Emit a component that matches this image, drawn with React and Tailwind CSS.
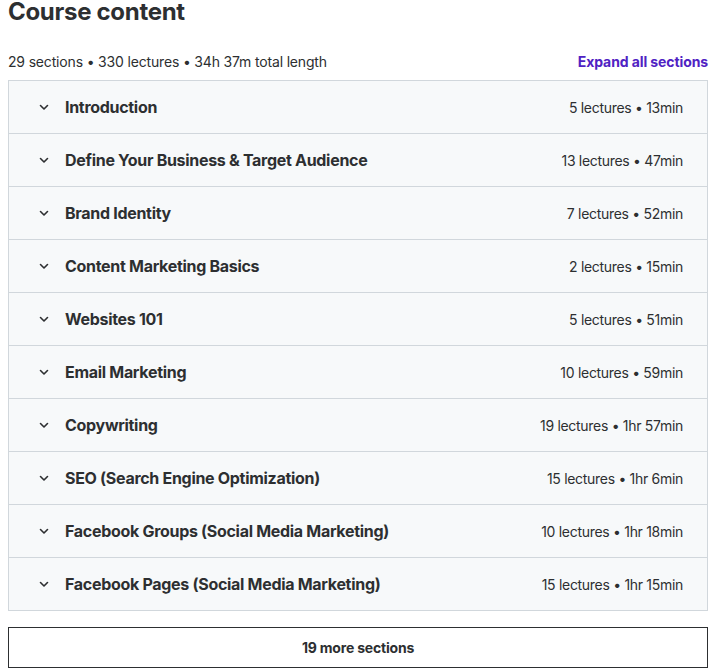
import React from 'react';

const sections = [
    { title: 'Introduction', meta: '5 lectures • 13min' },
    { title: 'Define Your Business & Target Audience', meta: '13 lectures • 47min' },
    { title: 'Brand Identity', meta: '7 lectures • 52min' },
    { title: 'Content Marketing Basics', meta: '2 lectures • 15min' },
    { title: 'Websites 101', meta: '5 lectures • 51min' },
    { title: 'Email Marketing', meta: '10 lectures • 59min' },
    { title: 'Copywriting', meta: '19 lectures • 1hr 57min' },
    { title: 'SEO (Search Engine Optimization)', meta: '15 lectures • 1hr 6min' },
    { title: 'Facebook Groups (Social Media Marketing)', meta: '10 lectures • 1hr 18min' },
    { title: 'Facebook Pages (Social Media Marketing)', meta: '15 lectures • 1hr 15min' },
];

const Chevron = () => (
    <svg width="12" height="12" viewBox="0 0 12 12" fill="none" className="shrink-0">
        <path d="M2.5 4.5 L6 8 L9.5 4.5" stroke="#2d2f31" strokeWidth="1.6" strokeLinecap="round" strokeLinejoin="round" />
    </svg>
);

const App = () => {
    return (
        <div className="bg-white w-[717px] h-[672px] overflow-hidden pl-2 pr-[9px] text-[#2d2f31] font-['Inter',sans-serif]">
            <h2 className="text-[24px] leading-[26px] font-bold tracking-[-0.3px] -mt-[1px]">Course content</h2>

            <div className="flex items-end justify-between mt-[27px] mb-[8px]">
                <span className="text-[14px] leading-[20px] tracking-[-0.17px]">29 sections • 330 lectures • 34h 37m total length</span>
                <button className="text-[14px] leading-[20px] font-bold tracking-[-0.1px] text-[#5022c3]">Expand all sections</button>
            </div>

            <div className="border border-[#d1d7dc]">
                {sections.map((s, i) => (
                    <div
                        key={s.title}
                        className={`h-[52px] bg-[#f7f9fa] flex items-center pl-[29px] pr-6 ${i < sections.length - 1 ? 'border-b border-[#d1d7dc] box-content' : ''}`}
                    >
                        <Chevron />
                        <span className="ml-[15px] text-[16px] font-bold tracking-[-0.3px] flex-1">{s.title}</span>
                        <span className="text-[14px] tracking-[-0.3px] text-[#2d2f31]">{s.meta}</span>
                    </div>
                ))}
            </div>

            <button className="mt-4 w-full h-[41px] border border-[#2d2f31] text-[14px] font-bold tracking-[-0.2px]">
                19 more sections
            </button>
        </div>
    );
};

export default App;
